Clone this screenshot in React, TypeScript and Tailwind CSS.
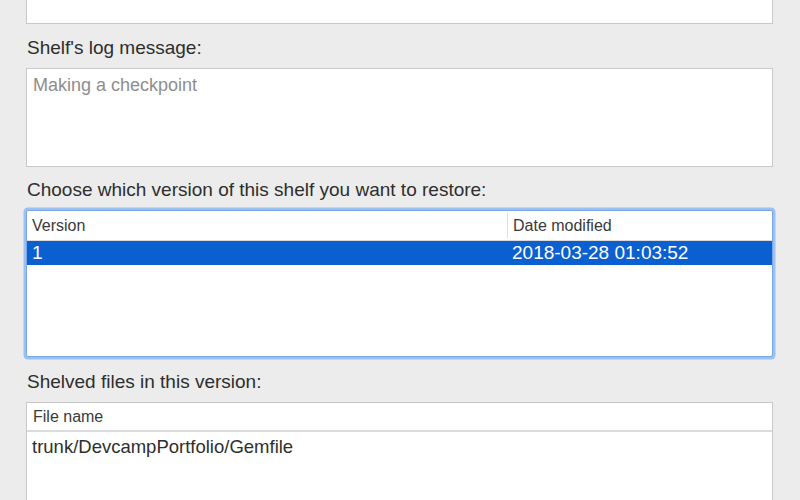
export default function App() {
  return (
    <div className="h-[500px] w-[800px] overflow-hidden bg-[#ececec] font-['Liberation_Sans',Arial,sans-serif] text-[#2e2e2e]">
      <div className="flex flex-col pl-[26px] pr-[27px]">
        {/* bottom of the field above, cut off by the window */}
        <div className="h-[24px] border-x border-b border-[#c9c9c9] bg-white" />

        <p className="mt-[13px] pl-px text-[19px] leading-[22px]">Shelf's log message:</p>
        <div className="mt-[9px] h-[99px] border border-[#c9c9c9] bg-white px-[6px] pt-[5px]">
          <span className="text-[18px] leading-[22px] text-[#8e8e8e]">Making a checkpoint</span>
        </div>

        <p className="mt-[12px] pl-px text-[19px] leading-[22px]">Choose which version of this shelf you want to restore:</p>
        <div className="mt-[9px] h-[147px] rounded-[2px] border border-[#79a6e6] bg-white shadow-[0_0_0_2.5px_#9cc0f0]">
          <div className="flex h-[30px] border-b border-[#dadada] text-[16px] text-[#3a3a3a]">
            <div className="flex w-[480px] items-center px-[5px]">Version</div>
            <div className="my-[2px] w-px bg-[#e0e0e0]" />
            <div className="flex flex-1 items-center px-[5px]">Date modified</div>
          </div>
          <div className="flex h-[24px] items-center bg-[#0b60d1] text-[19px] text-white">
            <div className="w-[481px] px-[5px]">1</div>
            <div className="flex-1 px-[4px]">2018-03-28 01:03:52</div>
          </div>
        </div>

        <p className="mt-[14px] pl-px text-[19px] leading-[22px]">Shelved files in this version:</p>
        <div className="mt-[9px] h-[120px] border border-[#c9c9c9] bg-white">
          <div className="flex h-[29px] items-center border-b-2 border-[#dcdcdc] px-[6px] text-[16px] text-[#3a3a3a]">
            File name
          </div>
          <div className="px-[5px] pt-[4px] text-[18.5px] leading-[22px]">trunk/DevcampPortfolio/Gemfile</div>
        </div>
      </div>
    </div>
  );
}
